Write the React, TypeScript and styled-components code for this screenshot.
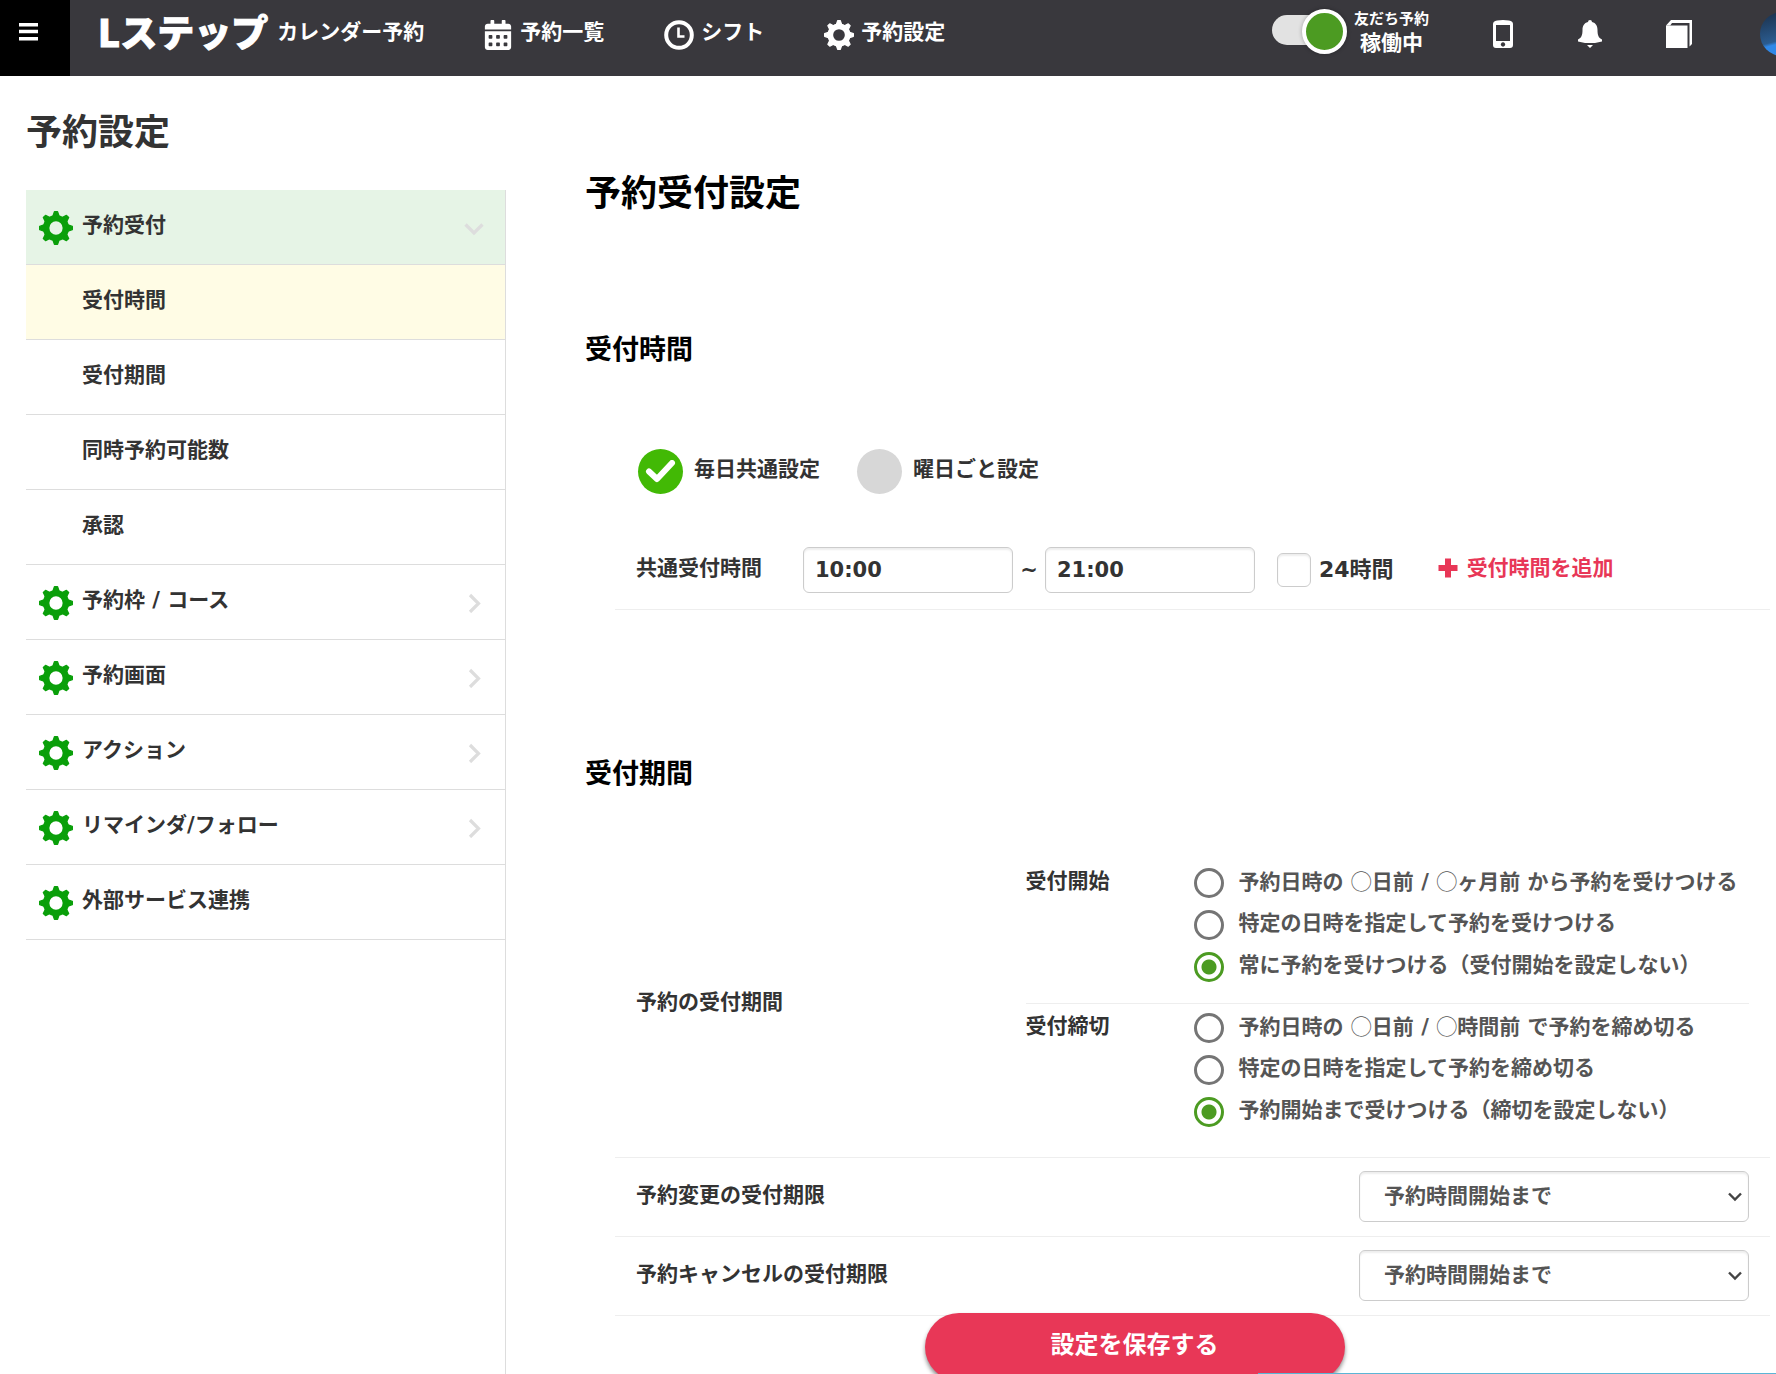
import React, { useState } from "react";
import styled, { createGlobalStyle, css } from "styled-components";
import { FaCalendarAlt } from "react-icons/fa";

const GlobalStyle = createGlobalStyle`
  *, *::before, *::after { box-sizing: border-box; }
  body {
    margin: 0;
    background: #fff;
    color: #333;
    font-family: "DejaVu Sans", "Noto Sans CJK JP", sans-serif;
    font-size: 21px;
    font-weight: 700;
    line-height: 30px;
  }
  h1, h2, p, ul { margin: 0; padding: 0; }
  ul { list-style: none; }
  a { color: inherit; text-decoration: none; }
  button, input, select { font: inherit; color: inherit; margin: 0; }
  button { border: 0; padding: 0; background: none; cursor: pointer; }
  svg { display: block; flex: none; }
`;

const Shell = styled.div`
  display: flex;
  flex-direction: column;
  height: 100vh;
  overflow: hidden;
`;

/* ---------- header ---------- */

const Header = styled.header`
  display: flex;
  flex: none;
  height: 76px;
  overflow: hidden;
  background: #39383d;
  color: #fff;
`;

const MenuButton = styled.button`
  display: flex;
  flex: none;
  width: 70px;
  padding: 22px 19px;
  background: #000;
`;

const Brand = styled.a`
  display: flex;
  flex: none;
  gap: 9px;
  height: 64px;
  align-items: center;
  padding-left: 28px;
`;

const Logo = styled.span`
  font-family: "Noto Sans CJK JP", sans-serif;
  font-size: 37px;
  font-weight: 900;
  line-height: 40px;
  padding-bottom: 2px;
  -webkit-text-stroke: 1px #fff;
`;

const Nav = styled.nav`
  display: flex;
  flex: none;
  gap: 60px;
  padding-left: 59px;
`;

const NavLink = styled.a`
  display: flex;
  gap: 7px;
  height: 70px;
  align-items: center;
`;

const NavText = styled.span`
  padding-bottom: 6px;
`;

const HeaderTools = styled.div`
  display: flex;
  flex: none;
  align-items: center;
  height: 68px;
  margin-left: auto;
`;

const ToggleLabel = styled.label`
  display: flex;
  gap: 7px;
  align-items: center;
  padding: 0 30px 4px 0;
  cursor: pointer;
`;

const ToggleInput = styled.input`
  appearance: none;
  position: relative;
  width: 75px;
  height: 46px;
  margin: 0;
  cursor: pointer;
  &::before {
    content: "";
    position: absolute;
    inset: 6px 7px 10px 0;
    border-radius: 15px;
    background: #e2e2e2;
  }
  &::after {
    content: "";
    position: absolute;
    top: 0;
    left: 0;
    width: 45px;
    height: 45px;
    border: 4px solid #fff;
    border-radius: 50%;
    background: #999;
    box-shadow: 0 0 4px rgba(0, 0, 0, 0.3);
  }
  &:checked::after {
    left: 30px;
    background: #4c9b22;
  }
`;

const ToggleText = styled.span`
  display: flex;
  flex-direction: column;
  align-items: center;
  line-height: 26px;
`;

const ToggleCaption = styled.span`
  font-size: 15px;
  line-height: 22px;
`;

const ToolButton = styled.button`
  display: flex;
  width: 88px;
  height: 68px;
  align-items: center;
  justify-content: center;
`;

const Avatar = styled.button`
  width: 44px;
  height: 44px;
  margin: 0 -28px 0 37px;
  border-radius: 50%;
  background: linear-gradient(165deg, #1d3654 10%, #2b5c90 60%, #2f88e8 66%);
`;

/* ---------- body ---------- */

const Body = styled.div`
  display: flex;
  flex: 1;
  min-height: 0;
`;

const Sidebar = styled.aside`
  display: flex;
  flex-direction: column;
  flex: none;
  width: 506px;
  padding: 30px 0 0 26px;
`;

const SideTitle = styled.h1`
  margin-bottom: 30px;
  font-size: 36px;
  line-height: 54px;
`;

const SideNav = styled.nav`
  flex: 1;
  border-right: 1px solid #ddd;
`;

const SideLink = styled.a<{ $tone?: "open" | "current"; $sub?: boolean }>`
  display: flex;
  align-items: center;
  height: 75px;
  gap: 9px;
  padding: 2px 21px 0 ${(p) => (p.$sub ? 56 : 13)}px;
  border-bottom: 1px solid #ddd;
  ${(p) => p.$tone === "open" && css`background: #e6f4e6;`}
  ${(p) => p.$tone === "current" && css`background: #fffce5;`}
`;

const SideText = styled.span`
  flex: 1;
  padding-bottom: 6px;
`;

const Main = styled.main`
  flex: 1;
  min-width: 0;
  overflow-y: auto;
  scrollbar-width: none;
  padding: 91px 6px 0 79px;
`;

const PageTitle = styled.h1`
  color: #000;
  font-size: 36px;
  line-height: 54px;
`;

const SectionTitle = styled.h2<{ $gap: number }>`
  margin-top: ${(p) => p.$gap}px;
  color: #000;
  font-size: 27px;
  line-height: 40px;
`;

const Section = styled.div<{ $gap: number }>`
  margin: ${(p) => p.$gap}px 0 0 30px;
`;

const ModeRow = styled.div`
  display: flex;
  gap: 37px;
  padding-left: 23px;
`;

const ModeLabel = styled.label`
  display: flex;
  align-items: center;
  gap: 11px;
  cursor: pointer;
`;

const Raised = styled.span`
  padding-bottom: 4px;
`;

const ModeText = styled.span`
  padding-bottom: 6px;
`;

const ModeBox = styled.span`
  display: grid;
  place-items: center;
  > * { grid-area: 1 / 1; pointer-events: none; }
  > input { pointer-events: auto; }
`;

const ModeInput = styled.input`
  appearance: none;
  width: 45px;
  height: 45px;
  border-radius: 50%;
  background: #d7d7d7;
  cursor: pointer;
  &:checked { background: #42b905; }
`;

const TimeRow = styled.div`
  display: flex;
  align-items: center;
  padding: 53px 21px 16px;
  border-bottom: 1px solid #eee;
`;

const TimeCaption = styled.span`
  width: 167px;
  padding-bottom: 4px;
`;

const TimeInput = styled.input`
  width: 210px;
  height: 46px;
  padding: 0 11px;
  border: 1px solid #ccc;
  border-radius: 6px;
  background: #fff;
  box-shadow: inset 0 2px 2px rgba(0, 0, 0, 0.07);
`;

const Tilde = styled.span`
  width: 32px;
  text-align: center;
`;

const AllDayLabel = styled.label`
  display: flex;
  align-items: center;
  gap: 8px;
  margin-left: 22px;
  font-size: 22px;
`;

const AllDayInput = styled.input`
  appearance: none;
  width: 34px;
  height: 34px;
  border: 1px solid #ccc;
  border-radius: 6px;
  background: #fff;
  box-shadow: inset 0 2px 2px rgba(0, 0, 0, 0.07);
  &:checked { background: #42b905; }
`;

const AddButton = styled.button`
  display: flex;
  align-items: center;
  gap: 9px;
  margin-left: 44px;
  padding-bottom: 4px;
  color: #e83757;
`;

const SettingRow = styled.div<{ $tall?: boolean }>`
  display: grid;
  grid-template-columns: ${(p) => (p.$tall ? "35fr 65fr" : "1fr 390px")};
  align-items: center;
  padding: ${(p) => (p.$tall ? "0 21px" : "13px 21px 14px")};
  border-bottom: 1px solid #eee;
`;

const ChoiceGroups = styled.div`
  padding: 12px 0 24px;
`;

const ChoiceGroup = styled.div`
  display: flex;
  & + & {
    margin-top: 15px;
    padding-top: 3px;
    border-top: 1px solid #eee;
  }
`;

const ChoiceTitle = styled.span`
  width: 168px;
  padding-top: 4px;
`;

const ChoiceList = styled.div`
  color: #555;
`;

const ChoiceLabel = styled.label`
  display: flex;
  align-items: center;
  gap: 15px;
  height: 42px;
  white-space: nowrap;
  cursor: pointer;
`;

const ChoiceInput = styled.input`
  appearance: none;
  flex: none;
  width: 30px;
  height: 30px;
  border: 3px solid #757575;
  border-radius: 50%;
  cursor: pointer;
  &:checked {
    border-color: #4c9b22;
    background: radial-gradient(circle, #4c9b22 7px, #fff 8px);
  }
`;

const Blank = styled.span`
  font-family: "Noto Sans CJK JP", sans-serif;
  font-weight: 400;
`;

const SelectBox = styled.span`
  display: grid;
  align-items: center;
  > * { grid-area: 1 / 1; }
  > svg { justify-self: end; margin-right: 7px; pointer-events: none; }
`;

const Select = styled.select`
  appearance: none;
  width: 100%;
  height: 51px;
  padding: 0 40px 2px 24px;
  border: 1px solid #ccc;
  border-radius: 6px;
  background: #fff;
  color: #555;
  box-shadow: inset 0 2px 2px rgba(0, 0, 0, 0.07);
`;

const SaveBar = styled.div`
  position: relative;
  display: flex;
  justify-content: center;
  margin-top: -3px;
  padding-right: 86px;
`;

const SaveButton = styled.button`
  width: 420px;
  height: 68px;
  padding-bottom: 4px;
  border-radius: 34px;
  background: #e83757;
  color: #fff;
  font-size: 24px;
  box-shadow: 0 3px 4px rgba(0, 0, 0, 0.45);
`;

const BottomLine = styled.div`
  position: fixed;
  right: 0;
  bottom: 0;
  width: 518px;
  height: 1px;
  background: #5bb5d6;
`;

/* ---------- icons ---------- */

const Gear = ({ size }: { size: number }) => (
  <svg width={size} height={size} viewBox="0 0 100 100" fill="currentColor" aria-hidden="true">
    <circle cx="50" cy="50" r="29" fill="none" stroke="currentColor" strokeWidth="19" />
    {[0, 45, 90, 135, 180, 225, 270, 315].map((a) => (
      <path
        key={a}
        d="M45.500 2h9l5 15h-19z"
        stroke="currentColor"
        strokeWidth="4"
        strokeLinejoin="round"
        transform={`rotate(${a} 50 50)`}
      />
    ))}
  </svg>
);

const GreenGear = styled.span`
  color: #0a9f0a;
`;

const MenuIcon = () => (
  <svg width="19" height="20" viewBox="0 0 19 20" fill="#fff" aria-hidden="true">
    <path d="M0 1h19v3.500H0zM0 7.800h19v3.500H0zM0 15h19v3.500H0z" />
  </svg>
);

const Clock = () => (
  <svg width="30" height="30" viewBox="0 0 30 30" fill="none" stroke="#fff" aria-hidden="true">
    <circle cx="15" cy="15" r="12.8" strokeWidth="4" />
    <path d="M14.5 7.5v9h6" strokeWidth="2.6" />
  </svg>
);

const Phone = () => (
  <svg width="20" height="28" viewBox="0 0 20 28" aria-hidden="true">
    <path
      fill="#fff"
      fillRule="evenodd"
      d="M4 0.5Q10-.5 16 .5Q20 1 20 4v21q0 3-3 3H3q-3 0-3-3V4Q0 1 4 .5zM3 5v16h14V5zM10 22.3a2.2 2.2 0 1 0 .01 0z"
    />
  </svg>
);

const Bell = () => (
  <svg width="26" height="28" viewBox="0 0 26 28" fill="#fff" aria-hidden="true">
    <path d="M10 2q0-2 2-2t2 2c4 1 5.500 4 5.500 8 0 5 1 8 4.500 9.500V21.500L17 23H7L0 21.500V19.500C3.500 18 4.500 15 4.500 10c0-4 1.500-7 5.500-8zM9 25h6l-3 3z" />
  </svg>
);

const Book = () => (
  <svg width="26" height="28" viewBox="0 0 26 28" fill="#fff" aria-hidden="true">
    <path d="M0 5.500h21.500V28H0z" />
    <path d="M0 5.500 5 0h21v24l-2.500 2.500V3H6L4.200 5.500z" />
  </svg>
);

const Chevron = ({ down }: { down?: boolean }) => (
  <svg width="20" height="20" viewBox="0 0 20 20" fill="none" stroke="#ddd" strokeWidth="3.200" aria-hidden="true">
    <path d={down ? "M1.500 6.500 10 15l8.500-8.500" : "M6 2l8.500 8.500L6 19"} />
  </svg>
);

const Check = () => (
  <svg width="31" height="24" viewBox="0 0 31 24" fill="none" stroke="#fff" strokeWidth="6" strokeLinejoin="round" strokeLinecap="round" aria-hidden="true">
    <path d="M4 11.500l8 7.500L27 3" />
  </svg>
);

const Plus = () => (
  <svg width="20" height="20" viewBox="0 0 20 20" fill="currentColor" aria-hidden="true">
    <path d="M7 .5h6V7h6.500v6H13v6.500H7V13H.5V7H7z" />
  </svg>
);

const SelectArrow = () => (
  <svg width="14" height="10" viewBox="0 0 14 10" fill="none" stroke="#444" strokeWidth="2.400" aria-hidden="true">
    <path d="M1 1.500l6 6 6-6" />
  </svg>
);

/* ---------- content ---------- */

type Item = { text: string; sub?: boolean; tone?: "open" | "current"; arrow?: "down" | "right" };

const sideItems: Item[] = [
  { text: "予約受付", tone: "open", arrow: "down" },
  { text: "受付時間", sub: true, tone: "current" },
  { text: "受付期間", sub: true },
  { text: "同時予約可能数", sub: true },
  { text: "承認", sub: true },
  { text: "予約枠 / コース", arrow: "right" },
  { text: "予約画面", arrow: "right" },
  { text: "アクション", arrow: "right" },
  { text: "リマインダ/フォロー", arrow: "right" },
  { text: "外部サービス連携" },
];

const startChoices = [
  "予約日時の ◯日前 / ◯ヶ月前 から予約を受けつける",
  "特定の日時を指定して予約を受けつける",
  "常に予約を受けつける（受付開始を設定しない）",
];

const endChoices = [
  "予約日時の ◯日前 / ◯時間前 で予約を締め切る",
  "特定の日時を指定して予約を締め切る",
  "予約開始まで受けつける（締切を設定しない）",
];

const withBlanks = (text: string) =>
  text.split(/(◯)/).map((part, i) => (part === "◯" ? <Blank key={i}>{part}</Blank> : part));

function Choices({ title, name, options }: { title: string; name: string; options: string[] }) {
  const [value, setValue] = useState(2);
  return (
    <ChoiceGroup role="radiogroup" aria-labelledby={`${name}-title`}>
      <ChoiceTitle id={`${name}-title`}>{title}</ChoiceTitle>
      <ChoiceList>
        {options.map((option, i) => (
          <ChoiceLabel key={option}>
            <ChoiceInput type="radio" name={name} checked={value === i} onChange={() => setValue(i)} />
            <Raised>{withBlanks(option)}</Raised>
          </ChoiceLabel>
        ))}
      </ChoiceList>
    </ChoiceGroup>
  );
}

function LimitRow({ id, label }: { id: string; label: string }) {
  return (
    <SettingRow>
      <Raised as="label" htmlFor={id}>{label}</Raised>
      <SelectBox>
        <Select id={id}>
          <option>予約時間開始まで</option>
        </Select>
        <SelectArrow />
      </SelectBox>
    </SettingRow>
  );
}

export default function App() {
  const [mode, setMode] = useState("daily");
  return (
    <Shell>
      <GlobalStyle />
      <Header>
        <MenuButton aria-label="メニュー"><MenuIcon /></MenuButton>
        <Brand href="#">
          <Logo>Lステップ</Logo>
          <span>カレンダー予約</span>
        </Brand>
        <Nav>
          <NavLink href="#"><FaCalendarAlt size={30} width={27} /><NavText>予約一覧</NavText></NavLink>
          <NavLink href="#"><Clock /><NavText>シフト</NavText></NavLink>
          <NavLink href="#"><Gear size={30} /><NavText>予約設定</NavText></NavLink>
        </Nav>
        <HeaderTools>
          <ToggleLabel>
            <ToggleInput type="checkbox" role="switch" defaultChecked />
            <ToggleText><ToggleCaption>友だち予約</ToggleCaption>稼働中</ToggleText>
          </ToggleLabel>
          <ToolButton aria-label="スマートフォン"><Phone /></ToolButton>
          <ToolButton aria-label="通知"><Bell /></ToolButton>
          <ToolButton aria-label="マニュアル"><Book /></ToolButton>
          <Avatar aria-label="アカウント" />
        </HeaderTools>
      </Header>
      <Body>
        <Sidebar>
          <SideTitle>予約設定</SideTitle>
          <SideNav>
            <ul>
              {sideItems.map((item) => (
                <li key={item.text}>
                  <SideLink href="#" $sub={item.sub} $tone={item.tone}>
                    {!item.sub && <GreenGear><Gear size={34} /></GreenGear>}
                    <SideText>{item.text}</SideText>
                    {item.arrow && <Chevron down={item.arrow === "down"} />}
                  </SideLink>
                </li>
              ))}
            </ul>
          </SideNav>
        </Sidebar>
        <Main>
          <PageTitle>予約受付設定</PageTitle>

          <SectionTitle $gap={109}>受付時間</SectionTitle>
          <Section $gap={79}>
            <ModeRow>
              {[["daily", "毎日共通設定"], ["weekly", "曜日ごと設定"]].map(([key, text]) => (
                <ModeLabel key={key}>
                  <ModeBox>
                    <ModeInput type="radio" name="mode" checked={mode === key} onChange={() => setMode(key)} />
                    {mode === key && <Check />}
                  </ModeBox>
                  <ModeText>{text}</ModeText>
                </ModeLabel>
              ))}
            </ModeRow>
            <TimeRow>
              <TimeCaption id="time-caption">共通受付時間</TimeCaption>
              <TimeInput type="text" defaultValue="10:00" aria-labelledby="time-caption" />
              <Tilde>~</Tilde>
              <TimeInput type="text" defaultValue="21:00" aria-labelledby="time-caption" />
              <AllDayLabel><AllDayInput type="checkbox" />24時間</AllDayLabel>
              <AddButton type="button"><Plus />受付時間を追加</AddButton>
            </TimeRow>
          </Section>

          <SectionTitle $gap={144}>受付期間</SectionTitle>
          <Section $gap={56}>
            <SettingRow $tall>
              <Raised>予約の受付期間</Raised>
              <ChoiceGroups>
                <Choices title="受付開始" name="start" options={startChoices} />
                <Choices title="受付締切" name="end" options={endChoices} />
              </ChoiceGroups>
            </SettingRow>
            <LimitRow id="change-limit" label="予約変更の受付期限" />
            <LimitRow id="cancel-limit" label="予約キャンセルの受付期限" />
          </Section>
          <SaveBar><SaveButton type="submit">設定を保存する</SaveButton></SaveBar>
        </Main>
      </Body>
      <BottomLine />
    </Shell>
  );
}
